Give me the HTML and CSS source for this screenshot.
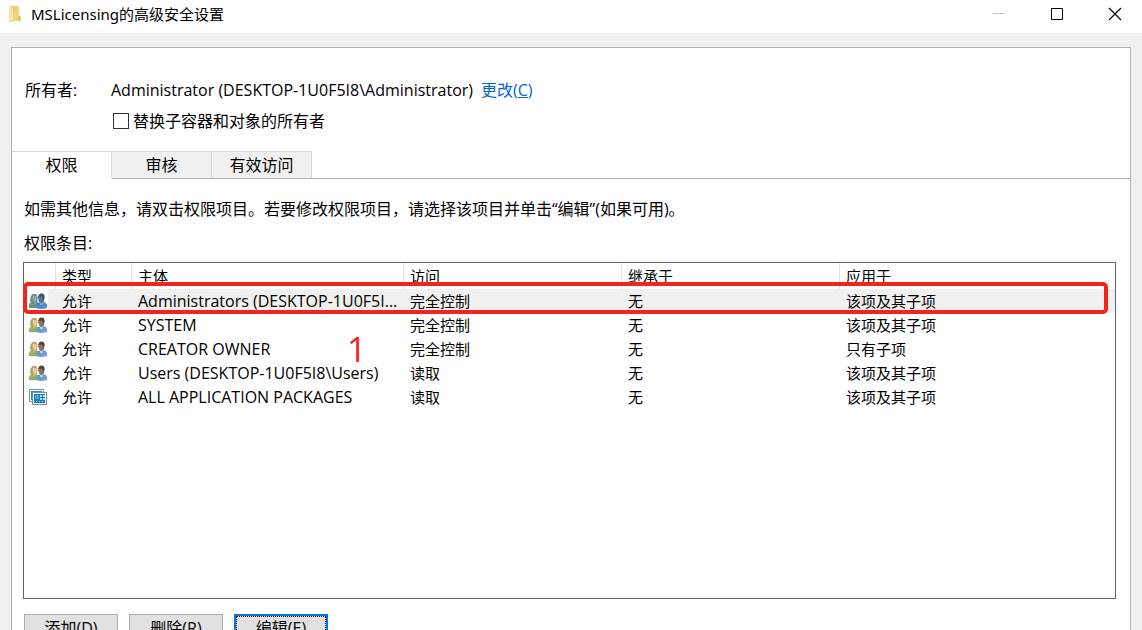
FILE: index.html
```html
<!DOCTYPE html>
<html lang="zh-CN">
<head>
<meta charset="utf-8">
<meta name="viewport" content="width=device-width, initial-scale=1">
<title>MSLicensing的高级安全设置</title>
<link rel="stylesheet" href="styles.css">
</head>
<body class="window">
<svg class="defs" aria-hidden="true">
  <defs>
    <linearGradient id="folder-back" x1="0" y1="0" x2="1" y2="0"><stop offset="0" stop-color="#f6dc92"/><stop offset="1" stop-color="#e9c25c"/></linearGradient>
    <linearGradient id="coat-green" x1="0" y1="0" x2="1" y2="1"><stop offset="0" stop-color="#a9bd78"/><stop offset="1" stop-color="#83a05c"/></linearGradient>
    <linearGradient id="coat-blue" x1="0" y1="0" x2="1" y2="1"><stop offset="0" stop-color="#5b8cc8"/><stop offset="1" stop-color="#7ba6dc"/></linearGradient>
    <symbol id="people" viewBox="0 0 18 16">
      <path d="M0 15V11.500Q.4 9.500 3.500 9L7 8.500 10 11V15Z" fill="url(#coat-green)"/>
      <path d="M1.300 9Q.8 1 5 .7 8.700.8 8.500 5.500L7.500 9 4 10Z" fill="#b39a62"/>
      <path d="M3.600 3.200Q5.600 1.800 7.800 3.600L7.700 6.500Q7 8.800 5.500 8.800 3.800 8.500 3.500 6Z" fill="#e7cba0"/>
      <path d="M4.200 8.200L6.200 11 7.300 8.500Z" fill="#dfbd8c"/>
      <path d="M8 15.500V12Q8.300 9.800 11 9.400L14 9Q17.800 9.800 18 12.500V15Q13 16.500 8 15.500Z" fill="url(#coat-blue)"/>
      <path d="M9.300 5Q9 .7 12.700.6 16 .8 15.500 5L14.500 8.500 12.500 10 10.500 8.500Z" fill="#4f4842"/>
      <path d="M9.700 3.800Q11.500 4 12.500 3.300L13.700 4.800 14 7Q13.200 9.300 12 9.300 10.400 9 9.700 6.500Z" fill="#95765c"/>
      <path d="M10.700 9L12 11 14 8.800 13.500 11.700 11.500 12Z" fill="#eef3f8"/>
    </symbol>
    <symbol id="people-selected" viewBox="0 0 18 16">
      <use href="#people" width="18" height="16"/>
      <path d="M0 15V11.500Q.4 9.500 1.500 9 .8 1 5 .7 8 .8 8.500 4 9.200.6 12.700.6 16 .8 15.500 5L14.800 9.200Q17.800 9.800 18 12.500V15Q13 16.500 8 15Z" fill="#0f6fc4" opacity=".38"/>
    </symbol>
    <symbol id="packages" viewBox="0 0 18 16">
      <path d="M.5.500H14.500V12.500H.5Z" fill="#fff" stroke="#6f93ad"/>
      <path d="M2 2H13V11H2Z" fill="#2c86cc"/>
      <path d="M3.500 3.500H17.500V15.500H3.500Z" fill="#fff" stroke="#6f93ad"/>
      <path d="M5 5H16V14H5Z" fill="#1779c9"/>
      <path d="M6 6H10V10H6Z" fill="#4ba5e5"/>
      <path d="M11 6H13V8H11ZM14 6H16V8H14ZM11 9H13V11H11ZM14 9H16V11H14Z" fill="#b9e2fb"/>
      <path d="M7 12H8V13H7ZM10 12H11V13H10ZM13 12H14V13H13Z" fill="#fff"/>
    </symbol>
  </defs>
</svg>

<header class="titlebar">
  <svg class="folder" viewBox="0 0 14 18" aria-hidden="true">
    <path d="M1 1H9V16L1 17Z" fill="url(#folder-back)"/>
    <path d="M8 1H11V12L12.500 13V16H5Z" fill="#f3d47e"/>
    <path d="M1 1L5 3V17L1 16Z" fill="#fae5a6"/>
    <path d="M10 11H12.500V16H10Z" fill="#e8bd58"/>
  </svg>
  <h1 class="title">MSLicensing的高级安全设置</h1>
  <div class="controls">
    <button class="control" type="button" aria-label="最小化" disabled><svg viewBox="0 0 14 14"><path d="M1 6.500H13" stroke="#c4c4c4"/></svg></button>
    <button class="control" type="button" aria-label="最大化"><svg viewBox="0 0 14 14"><path d="M1.500 1.500H12.500V12.500H1.500Z" fill="none" stroke="#000"/></svg></button>
    <button class="control" type="button" aria-label="关闭"><svg viewBox="0 0 14 14"><path d="M1 1L13 13M13 1L1 13" stroke="#000" stroke-width="1.200"/></svg></button>
  </div>
</header>

<main class="panel">
  <section class="owner">
    <span class="owner-label">所有者:</span>
    <div class="owner-name"><span>Administrator (DESKTOP-1U0F5I8\Administrator)</span><a class="change" href="#owner">更改(<u>C</u>)</a></div>
    <label class="replace"><input class="check" type="checkbox">替换子容器和对象的所有者</label>
  </section>

  <div class="tabs" role="tablist">
    <button class="tab tab-active" type="button" role="tab" aria-selected="true">权限</button>
    <button class="tab" type="button" role="tab" aria-selected="false">审核</button>
    <button class="tab" type="button" role="tab" aria-selected="false">有效访问</button>
  </div>

  <section class="content">
    <p class="hint">如需其他信息，请双击权限项目。若要修改权限项目，请选择该项目并单击“编辑”(如果可用)。</p>
    <h2 class="list-label" id="entries">权限条目:</h2>
    <div class="list">
      <table class="entries" aria-labelledby="entries">
        <colgroup><col class="col-icon"><col class="col-type"><col class="col-principal"><col class="col-access"><col class="col-inherited"><col></colgroup>
        <thead><tr><th></th><th>类型</th><th>主体</th><th>访问</th><th>继承于</th><th>应用于</th></tr></thead>
        <tbody>
          <tr class="selected"><td><svg class="icon"><use href="#people-selected"/></svg></td><td>允许</td><td class="principal">Administrators (DESKTOP-1U0F5I...</td><td>完全控制</td><td>无</td><td>该项及其子项</td></tr>
          <tr><td><svg class="icon"><use href="#people"/></svg></td><td>允许</td><td class="principal">SYSTEM</td><td>完全控制</td><td>无</td><td>该项及其子项</td></tr>
          <tr><td><svg class="icon"><use href="#people"/></svg></td><td>允许</td><td class="principal">CREATOR OWNER</td><td>完全控制</td><td>无</td><td>只有子项</td></tr>
          <tr><td><svg class="icon"><use href="#people"/></svg></td><td>允许</td><td class="principal">Users (DESKTOP-1U0F5I8\Users)</td><td>读取</td><td>无</td><td>该项及其子项</td></tr>
          <tr><td><svg class="icon"><use href="#packages"/></svg></td><td>允许</td><td class="principal">ALL APPLICATION PACKAGES</td><td>读取</td><td>无</td><td>该项及其子项</td></tr>
        </tbody>
      </table>
      <div class="marker"></div>
      <span class="marker-number">1</span>
    </div>
    <div class="actions">
      <button class="action" type="button">添加(<u>D</u>)</button>
      <button class="action" type="button">删除(<u>R</u>)</button>
      <button class="action action-default" type="button">编辑(<u>E</u>)</button>
    </div>
  </section>
</main>
</body>
</html>
```

FILE: styles.css
```css
* {
  box-sizing: border-box;
}

.window {
  display: flex;
  flex-direction: column;
  height: 100vh;
  margin: 0;
  overflow: hidden;
  background: #f0f0f0;
  color: #000;
  font: 16px/24px "Open Sans", "Noto Sans CJK SC", sans-serif;
}

button,
input {
  margin: 0;
  color: inherit;
  font: inherit;
}

.defs {
  position: absolute;
  width: 0;
  height: 0;
}

.titlebar {
  display: flex;
  flex: none;
  align-items: center;
  height: 33px;
  padding: 0 0 5px 8px;
  background: #fff;
}

.folder {
  width: 14px;
  height: 18px;
  margin-right: 9px;
}

.title {
  margin: 0;
  font-family: "Noto Sans", "Noto Sans CJK SC", sans-serif;
  font-size: 15px;
  font-weight: 400;
}

.controls {
  display: flex;
  margin-left: auto;
}

.control {
  display: grid;
  place-items: center;
  width: 58px;
  height: 28px;
  padding: 0;
  border: 0;
  background: none;
}

.control svg {
  width: 14px;
  height: 14px;
}

.control:last-child {
  width: 54px;
}

.control:nth-child(2) {
  width: 62px;
}

.control:first-child {
  width: 54px;
}

.panel {
  flex: 1 0 auto;
  margin: 14px 11px 0;
  border: 1px solid #b0b0b0;
  background: #fff;
}

.owner {
  display: grid;
  grid-template-columns: 86px 1fr;
  row-gap: 7px;
  padding: 30px 13px 18px;
}

.owner-name {
  display: flex;
  gap: 8px;
}

.change {
  color: #0066cc;
  text-decoration: none;
}

.replace {
  display: flex;
  grid-column: 2;
  align-items: center;
  gap: 4px;
  padding-left: 2px;
}

.check {
  width: 16px;
  height: 16px;
  border: 1px solid #333;
  background: #fff;
  appearance: none;
}

.tabs {
  display: flex;
  height: 28px;
  border-bottom: 1px solid #b0b0b0;
}

.tab {
  width: 100px;
  height: 28px;
  padding: 0;
  border: 1px solid #d9d9d9;
  border-left: 0;
  border-bottom-color: #b0b0b0;
  background: #f0f0f0;
}

.tab-active {
  border-bottom-color: #fff;
  background: #fff;
}

.content {
  padding: 18px 14px 14px 11px;
}

.hint,
.list-label {
  margin: 0 0 10px;
  padding-left: 1px;
  font-size: 16px;
  font-weight: 400;
}

.list-label {
  margin-bottom: 7px;
}

.list {
  position: relative;
  height: 337px;
  border: 1px solid #646464;
  font-size: 15px;
}

.entries {
  width: 100%;
  border-collapse: separate;
  border-spacing: 0;
  table-layout: fixed;
}

.col-icon {
  width: 32px;
}

.col-type {
  width: 76px;
}

.col-principal {
  width: 272px;
}

.col-access,
.col-inherited {
  width: 218px;
}

.entries th,
.entries td {
  height: 24px;
  padding: 0 0 0 6px;
  overflow: hidden;
  font-weight: 400;
  text-align: left;
  text-overflow: ellipsis;
  white-space: nowrap;
}

.entries th {
  height: 26px;
  border-right: 1px solid #e5e5e5;
}

.entries th:last-child {
  border-right: 0;
}

.entries td:first-child {
  padding: 0 0 0 5px;
}

.entries .principal {
  font-size: 16px;
}

.selected {
  background: linear-gradient(to right, #fff 24px, #f0f0f0 24px);
}

.icon {
  display: block;
  width: 18px;
  height: 16px;
}

.marker {
  position: absolute;
  top: 19px;
  right: 7px;
  left: -1px;
  height: 32px;
  border: 4px solid #f3241c;
  border-radius: 5px;
  pointer-events: none;
}

.marker-number {
  position: absolute;
  top: 69px;
  left: 323px;
  color: #f3241c;
  font-size: 34px;
  line-height: 34px;
}

.actions {
  display: flex;
  gap: 11px;
  padding: 15px 0 0 1px;
}

.action {
  width: 94px;
  height: 28px;
  padding: 0;
  border: 1px solid #adadad;
  background: #e1e1e1;
}

.action-default {
  border: 2px solid #0078d7;
  outline: 1px dotted #000;
  outline-offset: -3px;
}
```
